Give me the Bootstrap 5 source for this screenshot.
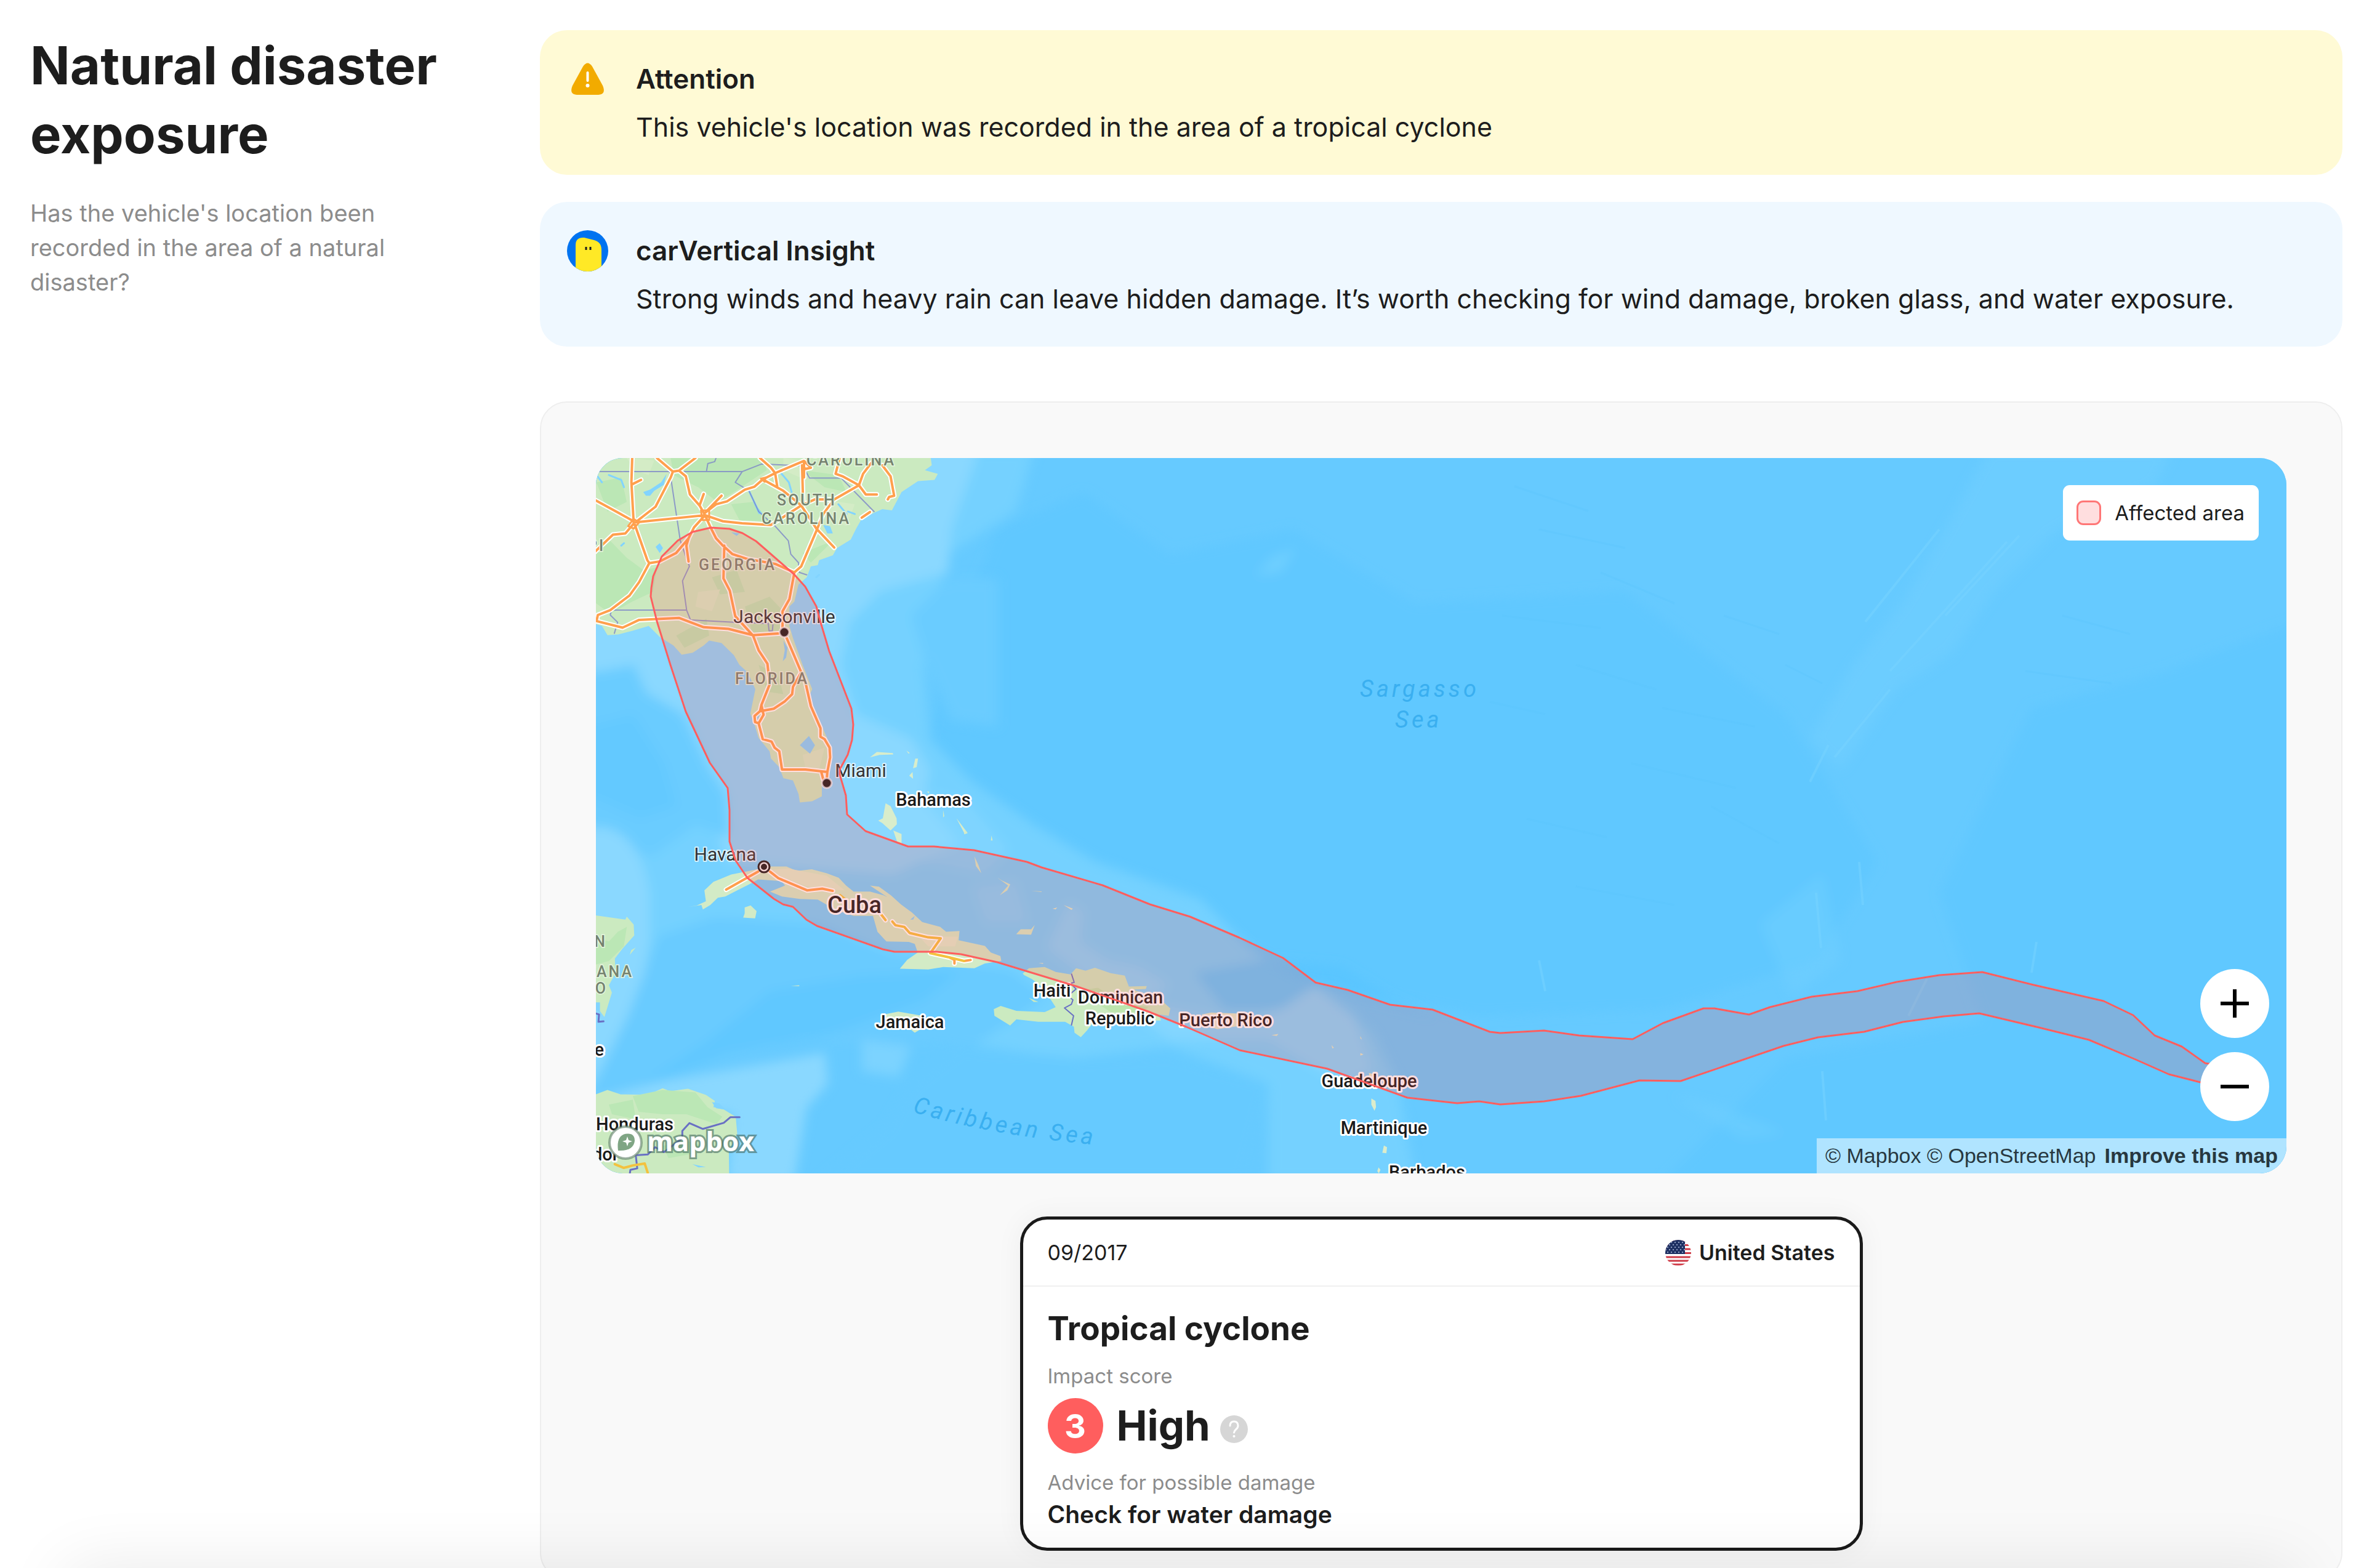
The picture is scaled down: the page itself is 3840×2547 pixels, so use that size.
<!DOCTYPE html>
<html lang="en">
<head>
<meta charset="utf-8">
<meta name="viewport" content="width=device-width, initial-scale=1">
<title>Natural disaster exposure</title>
<link rel="stylesheet" href="https://cdn.jsdelivr.net/npm/bootstrap@5.3.0/dist/css/bootstrap.min.css">
<style>
  body { font-family: Inter, "Open Sans", sans-serif; color: #1d1d1d; background: #fff; }
  .report { padding: 49px 35px 0 49px; }
  .intro { flex: 0 0 828px; padding: 2px 128px 0 0; }
  .intro h1 { font-size: 85px; line-height: 112px; font-weight: 700; margin: 0 0 43px; }
  .intro p { font-size: 38px; line-height: 56px; color: #8c8c8c; margin: 0; }
  .notice { border: 0; border-radius: 44px; padding: 46px 45px 44px; margin: 0 0 44px; gap: 45px; color: #1d1d1d; font-size: 43px; line-height: 67px; }
  .notice h2 { font-size: 44px; line-height: 67px; font-weight: 600; margin: 0 0 11px; }
  .notice p { margin: 0; }
  .notice-warn { background: #fffad5; }
  .notice-info { background: #eff8ff; }
  .notice-icon { width: 67px; height: 67px; flex: none; }
  .notice-lead { margin-left: -1px; }
  .panel { background: #f9f9f9; border: 2px solid #eee; border-radius: 44px; padding: 90px 89px 45px; margin-top: 89px; }
  .map-box { border-radius: 44px; overflow: hidden; background: #66caff; }
  .map-box > svg { width: 100%; height: auto; }
  .nss path, .nss circle { vector-effect: non-scaling-stroke; }
  .map-box text { font-family: Roboto, "Noto Sans", sans-serif; }
  .country { font-size: 29px; font-weight: 500; fill: #1a1a1a; stroke: #fff; stroke-width: 6; stroke-linejoin: round; paint-order: stroke; }
  .city { font-size: 30px; fill: #333; stroke: #fff; stroke-opacity: .7; stroke-width: 4; stroke-linejoin: round; paint-order: stroke; }
  .state { font-size: 25px; font-weight: 500; letter-spacing: 3px; fill: #75826f; stroke: #e4f4de; stroke-width: 3; paint-order: stroke; }
  .sea { font-size: 38px; font-style: italic; letter-spacing: 5px; fill: #3aaff0; }
  .capital { font-size: 38px; }
  .maker { font-size: 43px; font-weight: 700; fill: #fff; stroke: #456b60; stroke-opacity: .6; stroke-width: 6; paint-order: stroke; }
  .map-box text.maker { font-family: "Open Sans", sans-serif; }
  .legend { top: 44px; right: 45px; padding: 0 23px 0 22px; gap: 22px; height: 90px; border-radius: 11px; background: #fff; font-size: 33px; line-height: 45px; }
  .swatch { width: 40px; height: 40px; border: 3px solid #ff7676; background: #ffdedf; border-radius: 11px; }
  .zoomers { right: 28px; bottom: 85px; gap: 23px; }
  .zoomers .btn { width: 112px; height: 112px; padding: 0; background: #fff; border: 0; }
  .credits { right: 0; bottom: 0; height: 57px; padding: 0 14px; gap: 14px; background: rgba(255,255,255,.5); font-family: "Liberation Sans", sans-serif; font-size: 34px; line-height: 57px; }
  .credits a { color: #28383f; text-decoration: none; }
  .event { max-width: 1369px; margin: 70px auto 0; border: 5px solid #1a1a1a; border-radius: 44px; box-shadow: 0 0 45px rgba(0,0,0,.05); color: #1d1d1d; }
  .event-head { height: 109px; padding: 0 40px; border-bottom: 2px solid #f0f0f0; font-size: 34px; line-height: 45px; }
  .country-tag { gap: 13px; }
  .event-body { padding: 34px 40px 27px; }
  .event-body h3 { font-size: 53px; line-height: 68px; font-weight: 700; margin: 0 0 18px; }
  .event-body dl, .event-body dd { margin: 0; }
  .event-body dt { font-size: 33px; line-height: 50px; font-weight: 400; color: #8c8c8c; }
  .event-body .score { margin: 11px 0 22px; gap: 22px; }
  .score-num { width: 90px; height: 90px; background: #ff5e5e; color: #fff; font-size: 54px; font-weight: 700; }
  .score-word { font-size: 67px; line-height: 90px; font-weight: 700; }
  .help { border: 0; background: none; padding: 0; width: 45px; height: 45px; margin-top: 10px; }
  .advice { font-size: 39px; line-height: 54px; font-weight: 600; }
  .bottom-shade { left: 110px; right: 110px; top: 100%; height: 200px; box-shadow: 0 0 110px rgba(0,0,0,.09); pointer-events: none; }
</style>
</head>
<body>
<div class="vh-100 overflow-hidden position-relative">
<main class="report d-flex align-items-start">
  <header class="intro">
    <h1>Natural disaster exposure</h1>
    <p>Has the vehicle's location been recorded in the area of a natural disaster?</p>
  </header>
  <div class="flex-grow-1">
    <section class="alert notice notice-warn d-flex" role="alert">
      <svg class="notice-icon notice-lead" viewBox="0 0 67 67" aria-hidden="true"><path d="M26 13 Q33.500 2 41 13 L58 44 Q64 58 51 59 H16 Q3 58 9 44Z" fill="#f2ab00"/><path d="M33.500 23V36" stroke="#fff" stroke-width="4" stroke-linecap="round"/><circle cx="33.500" cy="44" r="3" fill="#fff"/></svg>
      <div><h2>Attention</h2><p>This vehicle's location was recorded in the area of a tropical cyclone</p></div>
    </section>
    <section class="alert notice notice-info d-flex" role="note">
      <svg class="notice-icon notice-lead" viewBox="0 0 67 67" aria-hidden="true"><defs><clipPath id="av"><circle cx="33.500" cy="33.500" r="33.500"/></clipPath></defs><g clip-path="url(#av)"><rect width="67" height="67" fill="#0073f0"/><path d="M14 70V24Q14 11 28 12L44 16Q56 19 56 32V70Z" fill="#ffe926"/></g><path d="M31 27V32M38 27V32" stroke="#1d1d1d" stroke-width="3"/></svg>
      <div><h2>carVertical Insight</h2><p>Strong winds and heavy rain can leave hidden damage. It’s worth checking for wind damage, broken glass, and water exposure.</p></div>
    </section>

    <section class="panel">
      <div class="map-box position-relative">
        <svg class="d-block" viewBox="968 744 2746 1162" role="img" aria-label="Map of the affected area">
          <defs><filter id="soft" x="-5%" y="-5%" width="110%" height="110%"><feGaussianBlur stdDeviation="9"/></filter></defs>
          <rect x="968" y="744" width="2746" height="1162" fill="#66caff"/>
          <!-- sea depth: open Atlantic -->
          <g filter="url(#soft)">
          <path fill="#60c8ff" d="M1620 860L1760 800 1900 900 2100 860 2300 980 2640 960 2900 1160 3050 1400 2950 1560 2700 1640 2400 1650 2137 1596 1933 1489 1668 1400 1582 1360 1500 1230 1540 1060Z"/>
          <path fill="#60c8ff" d="M3300 1150L3520 1090 3730 1010V1920H2700L2900 1720 3220 1660 3150 1450Z"/>
          <path fill="#6fcfff" opacity=".6" d="M3230 730H3530L3500 790 3400 830 3330 870 3240 960 3170 1060 3080 1120 2990 1250 2940 1200 3010 1080 3090 980 3160 860Z"/>
          <path fill="#78d3ff" opacity=".6" d="M2040 935L2065 905 2105 890 2080 930Z"/>
          <path fill="#6fcfff" opacity=".5" d="M2860 1500L2960 1420 2990 1560 2910 1620ZM2720 1780L2800 1800 2900 1840 2830 1850Z"/>
          </g>
          <path fill="none" stroke="#57c2fb" stroke-width="3" opacity=".25" d="M2460 790l120 40M2500 860l140 30M2600 930l120 50M2440 1000l160 20M2560 1080l130 40M2700 1150l150 30M2650 1240l170 40M2480 1330l130 30M2780 1310l110 60M2560 1440l160 30M3350 1000l110 30M3290 1090l140 20M2800 1000l90 30M2420 1140l90 20M2900 1080l60 30"/>
          <path fill="none" stroke="#78d3ff" stroke-width="4" opacity=".5" d="M3030 1010l120-150M3070 1090l190-210M2980 1230l90-110M3160 1000l120-130M2940 1270l30-60M2500 1560l10 50M2950 1450l8 90M3020 1400l6 70M2960 1740l6 80M3100 1650l30-60M3300 1580l8-50"/>
          <!-- sea depth: shelves along the coast -->
          <g filter="url(#soft)">
          <path fill="#74d1ff" d="M950 730H1680L1650 830 1540 900 1500 1080 1510 1200 1580 1270 1680 1340 1780 1400 1950 1460 2050 1560 2150 1610 2230 1680 2270 1760 2300 1920H2060V1760L1900 1700 1730 1720 1600 1700 1300 1690 950 1800Z"/>
          <path fill="#8ad8ff" d="M1450 730H1590L1545 860 1540 930 1430 960 1380 1010 1365 1080 1390 1160 1480 1200 1510 1250 1500 1300 1560 1370 1450 1420 1180 1400 1150 1300 1060 1170 950 1080V960L1270 940Z"/>
          <path fill="#6bccff" d="M950 1095L1030 1080 1050 1125 1110 1160 1150 1245 1180 1290 1185 1360 1130 1340 1060 1390 950 1360Z"/>
          <path fill="#63c9ff" d="M950 1180L1030 1160 1080 1240 1100 1310 1040 1330 950 1290Z"/>
          <path fill="#6bccff" d="M1480 1000L1540 940 1620 940V1180L1545 1170 1505 1080Z"/>
          <path fill="#8ad8ff" d="M950 1345Q1035 1330 1055 1450V1530L1030 1680 975 1760H950Z"/>
          <path fill="#69cbff" d="M1070 1520L1160 1490 1330 1500 1450 1550 1640 1575 1700 1620 1580 1700 1340 1690 1150 1740 950 1790 1020 1650Z"/>
          <path fill="#60c8ff" d="M1150 1690L1250 1610 1400 1585 1560 1577 1500 1625 1350 1680 1180 1710 1030 1770Z"/>
          <path fill="#8ad8ff" d="M950 1790L1060 1760 1340 1710 1345 1760 1310 1800 1290 1920H1180L1190 1810Z"/>
          <path fill="#66caff" d="M1560 1700L1760 1720 1900 1710 2060 1760 2020 1920H1330L1440 1830 1480 1760Z"/>
          <path fill="#8ad8ff" opacity=".6" d="M1400 1690L1480 1700 1460 1750 1400 1740Z"/>
          <path fill="#8ad8ff" opacity=".7" d="M1700 1540L1735 1465 1760 1480 1755 1530 1800 1560 1850 1570 1900 1600 1860 1630 2040 1660 2130 1600 2200 1650 2230 1740 2180 1760 2060 1690 1900 1690Z"/>
          <path fill="#8ad8ff" opacity=".5" d="M1480 1280L1570 1300 1640 1380 1600 1420 1500 1400ZM1580 1440L1650 1430 1670 1500 1600 1500Z"/>
          <path fill="#57c4ff" opacity=".7" d="M1940 1580L2060 1560 2180 1570 2260 1620 2330 1650 2140 1600 2080 1640 1990 1640Z"/>
          </g>

          <!-- south-eastern United States -->
          <g class="nss" transform="translate(960 740) scale(.4464 .3954)" stroke-linejoin="round" stroke-linecap="round">
            <path fill="#cbeac0" d="M10 0H1235L1240 40 1215 60 1262 75 1250 100 1190 105 1130 150 1095 225 1060 220 1030 235 985 260 965 300 945 345 895 380 880 410 830 430 825 450 800 455 785 500 755 530 740 600 722 620V700L735 750 770 860 805 960 795 985 810 1040 840 1110 870 1190 868 1250 865 1310 840 1350V1400L805 1420 760 1425 755 1390 735 1335 700 1325 685 1280 655 1245 650 1215 610 1160 595 1105 580 1060 598 960 570 890 540 860 520 820 475 770 430 760 410 780 370 810 330 818 300 780 250 745 210 700 150 720 100 735 60 738 40 700 10 690Z"/>
            <path fill="#bbe7b5" d="M290 10H620L640 60 520 150 460 190 390 130 300 80ZM10 370L70 350 130 420 190 470 240 460 225 560 150 600 70 650 10 600ZM510 200L590 190 650 270 540 265ZM440 500L530 470 560 560 470 570ZM310 740L420 670 430 740 340 790ZM560 620L650 580 700 640 690 720 590 740ZM770 60L900 80 930 150 850 130ZM20 110L110 90 130 190 60 230ZM770 400L880 350 800 440ZM610 860L680 900 700 980 640 970Z"/>
            <path fill="#d4ecc6" d="M130 10L230 20 210 80 160 60ZM700 10L770 20 760 90 700 60ZM840 180L960 200 930 290 860 260ZM390 560L470 550 440 640 380 620ZM770 1230L850 1200 830 1290 780 1280Z"/>
            <path fill="#82d4ff" d="M190 150L215 140 255 110 275 75 265 120 230 145 215 165 200 165ZM235 375L250 360 262 380 250 400ZM760 1190L793 1152 815 1190 797 1225ZM845 285L870 290 880 320 860 320ZM510 315L540 320 530 330ZM700 760L715 790 710 830 698 845 705 800ZM600 1060L615 1060 605 1090ZM590 190L625 240 610 240Z"/>
            <path fill="none" stroke="#82d4ff" stroke-width="3" d="M65 80L110 100 120 130M690 70L720 110 730 150M20 80L40 110M830 490L820 500M575 145L600 205 610 230M900 200L930 240M110 370L120 360M935 230L960 240"/>
            <path fill="none" stroke="#7d87c9" stroke-width="2" opacity=".8" d="M20 66H550L620 35 770 42 795 92H910L1030 230M550 66L525 110 575 145 610 230 670 290 718 350 727 405 755 440 758 480 785 490M420 66L425 33 450 25 455 10M287 66L325 350 358 455 333 515 348 635 362 675 520 685 645 690 648 720 660 720 662 695M348 635H75L70 655 97 685 85 730"/>
            <g fill="none">
              <path stroke="#fff" stroke-width="8" d="M150 10L147 110 155 270 205 430 212 442 175 520 140 575 70 635 25 655 20 680 115 707 175 675 230 672 320 667 410 705 500 712 590 738 690 730M10 180L100 235 155 270M10 400L80 325 125 320 155 280 235 210 290 90 298 66 240 10M298 66L320 62 380 10M320 62L345 85 360 160 395 205 415 245 155 275M182 100L150 118M410 158L395 205 M475 165L415 235 455 200 495 188 560 140 595 128 625 98 670 72 775 22 800 50 780 55 768 40M615 10L655 50 670 72 678 130M625 98L700 145 765 205 820 300 885 378M768 40L772 200M775 22L775 90M415 245L480 270 550 278 655 285 765 205 815 180 885 180 975 122 915 85 890 75 905 10M975 122L990 75 1020 30M975 122L1000 160H1040M1060 40L1090 85 1103 165 1085 170 1080 180M885 180L845 240 820 310 765 455 740 480 670 445 570 425 515 405 480 370 455 340 435 295 415 245M435 295L415 245 375 295 355 340 310 400 250 435 212 442M355 340L347 370 355 435M485 370L482 505 505 555 525 660 590 740 610 800 642 855 650 940 620 1025 615 1050 595 1070 597 1095 610 1100 625 1165 657 1175 668 1200 685 1215 695 1290H780L860 1300 870 1240 868 1200 850 1165 835 1155V1120L800 1030 780 930 765 890 712 750M740 480L722 590 697 640V720M765 890L735 950 732 980 705 1010 665 1040 615 1050M620 1025L628 1065 610 1100M838 1300L845 1330 855 1340M860 1300L857 1340M985 255L1015 232"/>
              <path stroke="#ffa04d" stroke-width="4" d="M150 10L147 110 155 270 205 430 212 442 175 520 140 575 70 635 25 655 20 680 115 707 175 675 230 672 320 667 410 705 500 712 590 738 690 730M10 180L100 235 155 270M10 400L80 325 125 320 155 280 235 210 290 90 298 66 240 10M298 66L320 62 380 10M320 62L345 85 360 160 395 205 415 245 155 275M182 100L150 118M410 158L395 205 M475 165L415 235 455 200 495 188 560 140 595 128 625 98 670 72 775 22 800 50 780 55 768 40M615 10L655 50 670 72 678 130M625 98L700 145 765 205 820 300 885 378M768 40L772 200M775 22L775 90M415 245L480 270 550 278 655 285 765 205 815 180 885 180 975 122 915 85 890 75 905 10M975 122L990 75 1020 30M975 122L1000 160H1040M1060 40L1090 85 1103 165 1085 170 1080 180M885 180L845 240 820 310 765 455 740 480 670 445 570 425 515 405 480 370 455 340 435 295 415 245M435 295L415 245 375 295 355 340 310 400 250 435 212 442M355 340L347 370 355 435M485 370L482 505 505 555 525 660 590 740 610 800 642 855 650 940 620 1025 615 1050 595 1070 597 1095 610 1100 625 1165 657 1175 668 1200 685 1215 695 1290H780L860 1300 870 1240 868 1200 850 1165 835 1155V1120L800 1030 780 930 765 890 712 750M740 480L722 590 697 640V720M765 890L735 950 732 980 705 1010 665 1040 615 1050M620 1025L628 1065 610 1100M838 1300L845 1330 855 1340M860 1300L857 1340M985 255L1015 232"/>
              <path stroke="#ffa04d" stroke-width="3" d="M400 225H430V265H405ZM135 290L155 260 175 275 155 300ZM618 95L635 90 632 108Z"/>
            </g>
            <!-- Bahamas, north -->
            <path fill="#d9edcb" d="M1015 1240L1040 1218 1098 1222 1100 1228 1050 1230ZM1148 1212L1160 1222 1155 1224ZM1180 1245L1190 1245 1185 1280 1172 1285ZM1170 1300L1172 1328 1158 1315ZM1072 1428L1090 1440 1112 1490 1113 1515 1090 1540 1060 1510 1045 1500 1062 1490ZM1100 1540L1130 1555 1130 1600 1115 1590ZM1330 1490L1370 1550 1360 1555ZM1222 1380h8v8z"/>
          </g>
          <!-- Cuba, Yucatan and Honduras -->
          <g class="nss" transform="translate(960 1300) scale(.4847 .3954)" stroke-linejoin="round" stroke-linecap="round">
            <path fill="#d3ebc6" d="M325 438L355 432 385 415 380 370 410 335 470 305 530 290 600 272 655 272 690 290 740 283 790 300 830 318 855 350 880 375 935 375 980 390 1030 420 1075 460 1110 500 1170 520 1190 540 1235 537 1232 575 1320 598 1340 625 1372 640 1375 660 1320 670 1285 690 1180 685 1130 695 1035 692 1060 655 1095 625 1085 590 1065 582 990 580 960 540 945 475 880 475 820 450 760 408 700 405 640 395 600 375 650 350 640 332 560 325 530 345 490 370 450 395 425 400 400 430 375 448 370 430ZM515 440L535 432 555 455 550 485 510 482 515 465ZM935 350L965 355 1005 390 1050 440 1035 440 990 395Z"/>
            <path fill="#dfeccb" d="M560 290L660 280 790 310 850 370 740 360 650 320ZM1100 560L1230 560 1220 600 1130 600Z"/>
            <path fill="#cbeac0" d="M0 470L115 490 120 478 143 510 145 555 105 610 80 650 82 710 60 760 70 790 45 890 20 850 0 840ZM150 605L130 635 135 615ZM0 1215L55 1190 100 1208 190 1210 240 1183 265 1195 325 1185 385 1210 415 1235 410 1260 445 1270 485 1300 490 1370 462 1440 463 1540H0Z"/>
            <path fill="#bbe7b5" d="M0 560L60 580 90 540 120 520 110 600 60 660 0 680ZM140 1215L240 1190 350 1200 390 1260 440 1300 420 1330 320 1290 240 1290 160 1280ZM60 1250L140 1230 150 1310 70 1290ZM240 1420L320 1400 380 1420 350 1450 260 1470Z"/>
            <path fill="#82d4ff" d="M405 1240L430 1245 450 1270 420 1265ZM340 1495L385 1507 360 1508ZM235 1465L240 1485M15 830L30 830 30 870 15 860ZM1070 490L1085 475 1080 490Z"/>
            <path fill="none" stroke="#6970c4" stroke-width="3" d="M498 1302H467L445 1325 375 1350 330 1326 306 1358V1388L245 1445 215 1425 190 1455 150 1458 155 1512 132 1518 130 1535M15 875L27 880 25 910 42 908"/>
            <path fill="none" stroke="#fff" stroke-width="8" d="M453 367L560 293M600 293L628 320 725 370 775 363 810 372M973 470L987 492M1010 498L1020 513 1050 520 1068 545 1130 563 1172 567 1137 628 1200 645 1250 660 1272 656M1218 655V670"/>
            <path fill="none" stroke="#ffa04d" stroke-width="4" d="M453 367L560 293M600 293L628 320 725 370 775 363 810 372M1205 648L1218 655V670M1250 660L1272 656"/>
            <path fill="none" stroke="#f3c23e" stroke-width="4" d="M835 390L850 405M973 470L987 492M1010 498L1020 513 1050 520 1068 545 1130 563 1172 567 1137 628 1200 645 1250 660M80 1495L110 1510 140 1500 180 1492 190 1530"/>
            <path fill="#d3ebc6" d="M980 880L1030 868 1110 885 1140 915 1085 955 1070 940 990 910ZM670 762l28-2v4zM1425 550L1440 530 1475 530 1487 512 1475 552ZM1475 372l35 2v3zM1362 318L1378 330 1405 345 1395 370 1370 390 1398 350ZM1285 230L1290 270 1308 300 1298 265ZM1180 40v30l4-5zM1225 75L1262 135 1250 140 1253 125ZM1342 145l4 20h-6z"/>
          </g>
          <!-- Hispaniola, Puerto Rico and the Lesser Antilles -->
          <g class="nss" transform="translate(1600 1300) scale(.5102 .3954)" stroke-linejoin="round">
            <path fill="#cbeac0" d="M120 712L140 690 190 685 225 705 272 715 290 690 320 700 350 688 400 710 445 720 458 765 515 763 512 775 470 778 500 790 560 820 590 855 585 885 555 880 560 905 520 905 470 890 380 890 340 920 325 945 305 973 285 955 283 930 255 910 170 910 100 900 80 925 30 885 28 858 50 845 100 865 190 870 225 850 205 810 180 765 150 735 125 718ZM140 812L170 828 155 828Z"/>
            <path fill="#bde5ae" d="M310 780L360 770 430 830 520 850 500 870 400 870 330 810Z"/>
            <path fill="#dceccb" d="M690 880L720 872 800 876 830 890 820 925 740 940 700 925ZM912 965l22-5-5 8zM1195 968l5 15-5-5zM1103 1005l8 12-5 2zM1195 1038l10 6-10 5zM1230 1225L1243 1235 1245 1260 1240 1275 1230 1250ZM1270 1418L1280 1425 1278 1450 1265 1448ZM1253 1508l6 10-5 15-5-10zM215 445l15-5-5 8zM250 430l30 15-5 5zM170 668h15v4zM1222 1120l15 5 8 50-20-30z"/>
            <path fill="none" stroke="#6970c4" stroke-width="2" d="M275 712L284 748 272 752 290 775 272 795M272 812L280 820 275 838 253 853 282 885 275 925"/>
          </g>
          <!-- place names -->
          <g class="state">
            <text x="1310" y="756">CAROLINA</text><text x="1262" y="821">SOUTH</text><text x="1237" y="851">CAROLINA</text>
            <text x="1135" y="926">GEORGIA</text><text x="1194" y="1111">FLORIDA</text>
            <text x="983" y="895" text-anchor="end">PI</text><text x="986" y="1538" text-anchor="end">N</text><text x="1029" y="1587" text-anchor="end">TANA</text><text x="987" y="1614" text-anchor="end">O</text>
          </g>
          <g class="city" text-anchor="middle">
            <text x="1274" y="1012">Jacksonville</text><text x="1398" y="1262">Miami</text><text x="1178" y="1398">Havana</text>
          </g>
          <g class="country" text-anchor="middle">
            <text x="1516" y="1309">Bahamas</text><text x="1478" y="1670">Jamaica</text><text x="1709" y="1619">Haiti</text>
            <text x="1820" y="1630">Dominican</text><text x="1819" y="1664">Republic</text><text x="1991" y="1667">Puerto Rico</text>
            <text x="2224" y="1766">Guadeloupe</text><text x="2248" y="1842">Martinique</text><text x="2318" y="1914">Barbados</text>
            <text x="1094" y="1836" text-anchor="end">Honduras</text><text x="1005" y="1885" text-anchor="end">dor</text><text x="981" y="1715" text-anchor="end">e</text>
            <text class="capital" x="1388" y="1483">Cuba</text>
          </g>
          <g class="sea">
            <text x="2209" y="1132">Sargasso</text><text x="2266" y="1182">Sea</text>
            <path id="arc" d="M1482 1806Q1620 1848 1820 1863" fill="none"/>
            <text><textPath href="#arc">Caribbean Sea</textPath></text>
          </g>
          <g fill="#1a1a1a" stroke="#fff" stroke-opacity=".7" stroke-width="3"><circle cx="1274" cy="1027" r="8"/><circle cx="1343" cy="1272" r="8"/></g>
          <circle cx="1241" cy="1408" r="9" fill="#eee" stroke="#1a1a1a" stroke-width="3"/><circle cx="1241" cy="1408" r="5" fill="#1a1a1a"/>
          <!-- affected area -->
          <path fill="#ff5c5c" fill-opacity=".2" stroke="#ff5e5e" stroke-width="3" stroke-linejoin="round" d="M1155 857L1185 859 1206 866 1228 879 1290 933 1308 953 1326 985 1333 1011 1347 1058 1364 1102 1383 1151 1386 1177 1384 1202 1377 1226 1364 1250V1258L1374 1292 1376 1323 1406 1350 1475 1375H1517L1582 1381 1668 1400 1692 1409 1791 1438 1868 1469 1933 1489 2013 1523 2084 1556 2137 1596 2189 1608 2258 1632 2327 1640 2420 1676 2437 1678 2508 1674 2565 1682 2652 1688 2701 1662 2767 1638H2785L2841 1648 2875 1636 2943 1619 3017 1610 3081 1595 3150 1584 3220 1579 3304 1600 3417 1626 3465 1649 3500 1682 3544 1700 3582 1727 3610 1731 3610 1766 3574 1758 3523 1745 3469 1721 3393 1689 3312 1669 3215 1646 3157 1651 3091 1660 3028 1676 2953 1685 2897 1699 2730 1756 2663 1755 2568 1780 2508 1789 2437 1794 2403 1789 2367 1792 2286 1783 2156 1736 2014 1706 1927 1668 1865 1643 1748 1602 1620 1563 1561 1550 1522 1546H1453L1434 1542 1327 1504 1310 1494 1288 1473 1272 1469 1257 1460 1214 1426 1195 1398 1185 1367V1316L1182 1280 1153 1239 1114 1156 1089 1080 1067 1009 1057 969 1058 955 1061 936 1075 904 1101 878 1125 864Z"/>
          <!-- map provider mark -->
          <circle cx="1016" cy="1856" r="26" fill="#fff" stroke="#5d7d66" stroke-opacity=".6" stroke-width="4"/>
          <path d="M1004 1869Q1001 1846 1015 1842Q1031 1839 1031 1853Q1029 1870 1004 1869Z" fill="#7fa584"/><path d="M1019 1846L1021 1852 1027 1854 1021 1856 1019 1862 1017 1856 1011 1854 1017 1852Z" fill="#fff"/>
          <text class="maker" x="1051" y="1870">mapbox</text>
        </svg>
        <div class="legend position-absolute d-flex align-items-center"><span class="swatch"></span><span>Affected area</span></div>
        <div class="zoomers position-absolute d-flex flex-column">
          <button type="button" class="btn rounded-circle" aria-label="Zoom in"><svg width="46" height="46" viewBox="0 0 46 46" class="d-block mx-auto"><path d="M0 23H46M23 0V46" stroke="#000" stroke-width="6"/></svg></button>
          <button type="button" class="btn rounded-circle" aria-label="Zoom out"><svg width="46" height="46" viewBox="0 0 46 46" class="d-block mx-auto"><path d="M0 23H46" stroke="#000" stroke-width="6"/></svg></button>
        </div>
        <div class="credits position-absolute d-flex"><span><a href="#">© Mapbox</a> <a href="#">© OpenStreetMap</a></span><a href="#" class="fw-bold">Improve this map</a></div>
      </div>

      <article class="card event">
        <div class="event-head d-flex align-items-center justify-content-between">
          <span>09/2017</span>
          <span class="country-tag d-flex align-items-center fw-semibold">
            <svg width="42" height="42" viewBox="0 0 42 42" aria-hidden="true"><defs><clipPath id="fl"><circle cx="21" cy="21" r="21"/></clipPath></defs><g clip-path="url(#fl)"><rect width="42" height="42" fill="#fff"/><path d="M0 2H42M0 8.500H42M0 15H42M0 21.500H42M0 28H42M0 34H42M0 40H42" stroke="#cf3b47" stroke-width="3"/><rect width="32" height="23" fill="#1f3163"/><path d="M3 4H32M0 8H32M3 12H32M0 16H32M3 20H32" stroke="#8d9abf" stroke-width="2" stroke-dasharray="2 4"/></g></svg>
            United States
          </span>
        </div>
        <div class="event-body">
          <h3>Tropical cyclone</h3>
          <dl>
            <dt>Impact score</dt>
            <dd class="score d-flex align-items-center">
              <span class="score-num rounded-circle d-flex align-items-center justify-content-center">3</span>
              <span class="d-flex align-items-center gap-3"><span class="score-word">High</span>
              <button type="button" class="help" aria-label="About the impact score"><svg class="d-block" width="45" height="45" viewBox="0 0 45 45"><circle cx="22.500" cy="22.500" r="22.500" fill="#d6d6d6"/><path d="M16 17Q16 10 22.500 10T29 17Q29 20 26 22.500T22.500 28" fill="none" stroke="#fff" stroke-width="3" stroke-linecap="round"/><circle cx="22.500" cy="34" r="2" fill="#fff"/></svg></button></span>
            </dd>
            <dt>Advice for possible damage</dt>
            <dd class="advice">Check for water damage</dd>
          </dl>
        </div>
      </article>
    </section>
  </div>
</main>
<div class="bottom-shade position-absolute"></div>
</div>
<script src="https://cdn.jsdelivr.net/npm/bootstrap@5.3.0/dist/js/bootstrap.bundle.min.js"></script>
</body>
</html>
